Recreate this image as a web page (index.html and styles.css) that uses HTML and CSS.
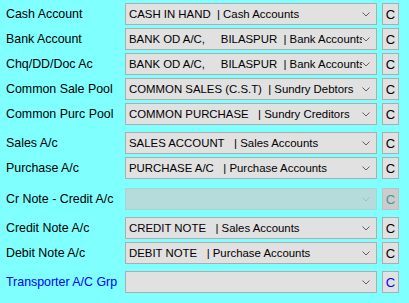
FILE: index.html
```html
<!DOCTYPE html>
<html lang="en">
<head>
    <meta charset="UTF-8">
    <meta name="viewport" content="width=device-width, initial-scale=1.0">
    <title>Account Settings</title>
    <link rel="stylesheet" href="styles.css">
</head>
<body>
    <div class="settings-form">
        <div class="row">
            <label>Cash Account</label>
            <select><option>CASH IN HAND&nbsp;&nbsp;| Cash Accounts</option></select>
            <button>C</button>
        </div>
        <div class="row">
            <label>Bank Account</label>
            <select><option>BANK OD A/C,&nbsp;&nbsp;&nbsp;&nbsp; BILASPUR&nbsp;&nbsp;| Bank Accounts</option></select>
            <button>C</button>
        </div>
        <div class="row">
            <label>Chq/DD/Doc Ac</label>
            <select><option>BANK OD A/C,&nbsp;&nbsp;&nbsp;&nbsp; BILASPUR&nbsp;&nbsp;| Bank Accounts</option></select>
            <button>C</button>
        </div>
        <div class="row">
            <label>Common Sale Pool</label>
            <select><option>COMMON SALES (C.S.T)&nbsp;&nbsp;| Sundry Debtors</option></select>
            <button>C</button>
        </div>
        <div class="row">
            <label>Common Purc Pool</label>
            <select><option>COMMON PURCHASE&nbsp;&nbsp;&nbsp;| Sundry Creditors</option></select>
            <button>C</button>
        </div>
        <div class="row gap-before">
            <label>Sales A/c</label>
            <select><option>SALES ACCOUNT&nbsp;&nbsp;&nbsp;| Sales Accounts</option></select>
            <button>C</button>
        </div>
        <div class="row">
            <label>Purchase A/c</label>
            <select><option>PURCHASE A/C&nbsp;&nbsp;&nbsp;| Purchase Accounts</option></select>
            <button>C</button>
        </div>
        <div class="row gap-wide">
            <label>Cr Note - Credit A/c</label>
            <select disabled><option></option></select>
            <button disabled>C</button>
        </div>
        <div class="row gap-before">
            <label>Credit Note A/c</label>
            <select><option>CREDIT NOTE&nbsp;&nbsp;&nbsp;| Sales Accounts</option></select>
            <button>C</button>
        </div>
        <div class="row">
            <label>Debit Note A/c</label>
            <select><option>DEBIT NOTE&nbsp;&nbsp;&nbsp;| Purchase Accounts</option></select>
            <button>C</button>
        </div>
        <div class="row gap-before link">
            <label>Transporter A/C Grp</label>
            <select><option></option></select>
            <button>C</button>
        </div>
    </div>
</body>
</html>
```

FILE: styles.css
```css
body {
    font-family: "Liberation Sans", Arial, sans-serif;
    font-size: 12.4px;
    background-color: #80ffff;
    margin: 0;
    padding: 0;
}

.settings-form {
    display: flex;
    flex-direction: column;
    gap: 3px;
    padding: 3px 0 0 6px;
}

.row {
    display: flex;
    align-items: center;
    height: 22px;
}
.row.gap-before {
    margin-top: 4px;
}
.row.gap-wide {
    margin-top: 6px;
}

label {
    width: 119px;
    color: #000;
}
.link label {
    color: #0000ff;
}

select {
    appearance: none;
    -webkit-appearance: none;
    box-sizing: border-box;
    width: 252px;
    height: 22px;
    margin: 0;
    padding: 0 14px 0 3px;
    font-family: inherit;
    font-size: 11.4px;
    color: #000;
    background-color: #e1e1e1;
    background-image: url("data:image/svg+xml,%3Csvg xmlns='http://www.w3.org/2000/svg' width='8' height='5'%3E%3Cpath d='M0.5 0.5 L4 4 L7.5 0.5' fill='none' stroke='%23606060' stroke-width='1'/%3E%3C/svg%3E");
    background-repeat: no-repeat;
    background-position: right 6px center;
    border: 1px solid #adadad;
    border-radius: 0;
    outline: none;
}
select:disabled {
    background-color: #cccccc;
    border-color: #bfbfbf;
    background-image: url("data:image/svg+xml,%3Csvg xmlns='http://www.w3.org/2000/svg' width='8' height='5'%3E%3Cpath d='M0.5 0.5 L4 4 L7.5 0.5' fill='none' stroke='%23a8a8a8' stroke-width='1'/%3E%3C/svg%3E");
}

button {
    box-sizing: border-box;
    width: 17px;
    height: 22px;
    margin-left: 5px;
    padding: 0;
    font-family: inherit;
    font-size: 13px;
    color: #000;
    background-color: #e1e1e1;
    border: 1px solid #adadad;
    border-radius: 0;
}
button:disabled {
    color: #3a9aa0;
    background-color: #cccccc;
    border-color: #bfbfbf;
}
.link button {
    color: #0000ff;
}
```
